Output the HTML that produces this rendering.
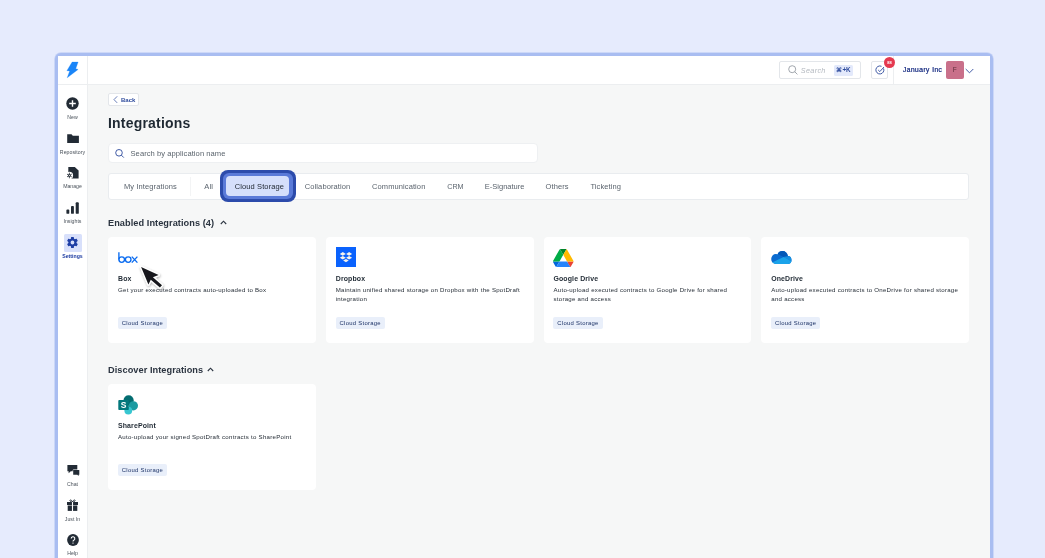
<!DOCTYPE html>
<html><head><meta charset="utf-8">
<style>
*{box-sizing:border-box;margin:0;padding:0}
html,body{will-change:transform;width:1045px;height:558px;overflow:hidden;background:#e6ebfd;font-family:"Liberation Sans",sans-serif;color:#1f2933}
.abs{position:absolute}
#frame{position:absolute;left:55px;top:53px;width:937.5px;height:520px;border:3px solid #a9bdf1;border-bottom:none;border-radius:6px 6px 0 0;background:#f6f7f7;overflow:hidden;box-shadow:0 0 0 0.8px rgba(169,189,241,0.55)}
#sidebar{position:absolute;left:58px;top:56px;width:30px;height:510px;background:#fff;border-right:1px solid #eceef0}
#header{position:absolute;left:88px;top:56px;width:902px;height:29px;background:#fff;border-bottom:1px solid #eceef0}
#logoline{position:absolute;left:58px;top:84px;width:29px;height:1px;background:#eceef0}
.lbl{position:absolute;left:58px;width:29px;text-align:center;font-size:5.2px;line-height:1;color:#4a525b;white-space:nowrap}
.card{position:absolute;background:#fff;border-radius:4px;width:207.75px;height:105.5px}
.ctitle{position:absolute;left:10px;top:39px;font-size:6.95px;letter-spacing:0.12px;line-height:1;font-weight:bold;color:#1f2933;white-space:nowrap}
.cdesc{position:absolute;left:10px;top:47.94px;font-size:6.1px;letter-spacing:0.26px;line-height:9.5px;color:#242c35;width:200px;white-space:nowrap}
.tag{position:absolute;left:9.8px;top:80.2px;height:11.6px;width:49.4px;background:#e9effa;border-radius:2px;font-size:5.9px;letter-spacing:0.28px;color:#1c3266;line-height:12.3px;text-align:center;white-space:nowrap}
.tab{position:absolute;top:183.1px;font-size:7.5px;letter-spacing:0.1px;line-height:1;color:#5a636d;white-space:nowrap}
h2{position:absolute;font-size:9.2px;letter-spacing:0.06px;line-height:1;font-weight:bold;color:#2b3440;white-space:nowrap}
</style></head><body>
<div id="frame"></div>
<div id="sidebar"></div>
<div id="header"></div>
<div id="logoline"></div>

<!-- logo -->
<svg class="abs" style="left:66px;top:61px" width="13" height="18" viewBox="0 0 13 18">
<path d="M6.1 1.1L12.1 1.1 9.75 7.7 12.1 8.4 1.2 16.8 3.7 9.9 0.9 9.7Z" fill="#1a85f8" stroke="#1a85f8" stroke-width="0.3" stroke-linejoin="round"/>
</svg>

<!-- sidebar icons -->
<svg class="abs" style="left:66px;top:97.2px" width="13" height="13" viewBox="0 0 13 13">
<circle cx="6.5" cy="6.5" r="6.2" fill="#222b35"/>
<path d="M6.5 3.2v6.6M3.2 6.5h6.6" stroke="#fff" stroke-width="1.4"/>
</svg>
<div class="lbl" style="top:115px">New</div>

<svg class="abs" style="left:66.5px;top:133.5px" width="13" height="10" viewBox="0 0 13 10">
<path d="M0.2 0.3h4.3l1.3 1.4h6.1v7.4h-11.7z" fill="#222b35"/>
</svg>
<div class="lbl" style="top:149.8px;letter-spacing:0.05px">Repository</div>

<svg class="abs" style="left:67px;top:167px" width="12" height="12" viewBox="0 0 12 12">
<path d="M1.3 0H7.8L11.6 3.5V11.6H1.3Z" fill="#222b35"/>
<circle cx="2.4" cy="8.5" r="3.7" fill="#fff"/>
<path d="M2.4 5.7V11.3M0 7.1L4.8 9.9M0 9.9L4.8 7.1" stroke="#222b35" stroke-width="0.8"/>
<circle cx="2.4" cy="8.5" r="1.3" fill="#222b35"/>
<circle cx="2.4" cy="8.5" r="0.55" fill="#fff"/>
</svg>
<div class="lbl" style="top:183.5px">Manage</div>

<svg class="abs" style="left:66px;top:201.5px" width="13" height="12" viewBox="0 0 13 12">
<rect x="0.4" y="7.5" width="2.9" height="4.3" rx="0.9" fill="#222b35"/>
<rect x="5" y="3.9" width="2.9" height="7.9" rx="0.9" fill="#222b35"/>
<rect x="9.7" y="0.3" width="3.1" height="11.5" rx="0.9" fill="#222b35"/>
</svg>
<div class="lbl" style="top:218.5px">Insights</div>

<div class="abs" style="left:63.9px;top:234px;width:18px;height:17.5px;background:#d8e0fb;border-radius:1.5px"></div>
<svg class="abs" style="left:66.15px;top:235.7px" width="13" height="13" viewBox="0 0 24 24">
<path fill="#1d3ea5" d="M19.4 13c.04-.33.06-.66.06-1s-.02-.67-.06-1l2.1-1.65a.5.5 0 0 0 .12-.64l-2-3.46a.5.5 0 0 0-.6-.22l-2.49 1a7.3 7.3 0 0 0-1.73-1L14.4 2.42A.5.5 0 0 0 13.9 2h-4a.5.5 0 0 0-.5.42L9.04 5.07c-.63.26-1.2.6-1.73 1l-2.49-1a.5.5 0 0 0-.6.22l-2 3.46a.5.5 0 0 0 .12.64L4.44 11c-.04.33-.06.66-.06 1s.02.67.06 1l-2.1 1.65a.5.5 0 0 0-.12.64l2 3.46c.12.22.38.3.6.22l2.49-1c.53.4 1.1.74 1.73 1l.38 2.65c.04.24.25.42.5.42h4c.25 0 .46-.18.5-.42l.38-2.65c.63-.26 1.2-.6 1.73-1l2.49 1c.22.08.48 0 .6-.22l2-3.46a.5.5 0 0 0-.12-.64zM11.9 15.5a3.5 3.5 0 1 1 0-7 3.5 3.5 0 0 1 0 7z"/>
</svg>
<div class="lbl" style="top:254px;color:#1b3aa0;font-weight:bold">Settings</div>

<svg class="abs" style="left:66.5px;top:465px" width="13" height="12" viewBox="0 0 13 12">
<path d="M0.4 0H10.3V6.3H3.8L1.6 8.3V6.3H0.4Z" fill="#222b35"/>
<path d="M6.2 4.9H12.3V9.8H11.6V11L10.3 9.8H6.2Z" fill="#222b35" stroke="#fff" stroke-width="0.9" paint-order="stroke"/>
</svg>
<div class="lbl" style="top:482px">Chat</div>

<svg class="abs" style="left:66.9px;top:499.4px" width="11" height="12" viewBox="0 0 11 12">
<path d="M5.5 2.8C4.6 0.8 2.6 0.3 3 1.8S5.5 2.8 5.5 2.8M5.5 2.8C6.4 0.8 8.4 0.3 8 1.8S5.5 2.8 5.5 2.8" stroke="#222b35" stroke-width="0.9" fill="none"/>
<rect x="0" y="3" width="11" height="3" fill="#222b35"/>
<rect x="0.7" y="6.5" width="9.6" height="5.4" fill="#222b35"/>
<rect x="4.95" y="3" width="1.1" height="9" fill="#fff"/>
</svg>
<div class="lbl" style="top:516.8px">Just In</div>

<svg class="abs" style="left:66.5px;top:534px" width="12" height="12" viewBox="0 0 12 12">
<circle cx="6" cy="6" r="5.9" fill="#222b35"/>
<path d="M4.2 4.6a1.8 1.8 0 1 1 2.6 1.6c-.6.3-.8.6-.8 1.3" stroke="#fff" stroke-width="1.1" fill="none"/>
<circle cx="6" cy="9.1" r="0.7" fill="#fff"/>
</svg>
<div class="lbl" style="top:550.5px">Help</div>

<!-- header right -->
<div class="abs" style="left:779px;top:61px;width:82px;height:18px;border:1px solid #e3e6ea;border-radius:2px;background:#fff"></div>
<svg class="abs" style="left:787.5px;top:65px" width="10" height="10" viewBox="0 0 10 10">
<circle cx="4.2" cy="4.2" r="3.5" stroke="#8a9199" stroke-width="0.8" fill="none"/>
<path d="M6.8 6.8l2.6 2.6" stroke="#8a9199" stroke-width="0.8"/>
</svg>
<div class="abs" style="left:800.8px;top:66.6px;font-size:7.2px;letter-spacing:0.35px;line-height:1;font-style:italic;color:#b3b8bf">Search</div>
<div class="abs" style="left:834px;top:65px;width:19px;height:10.5px;background:#e3e9fb;border-radius:1.5px;font-size:6.3px;font-weight:bold;color:#2d4a9c;text-align:center;line-height:10.5px">&#8984;+K</div>

<div class="abs" style="left:871px;top:61px;width:17px;height:18px;border:1px solid #e3e6ea;border-radius:2px;background:#fff"></div>
<svg class="abs" style="left:875px;top:65px" width="10" height="10" viewBox="0 0 10 10">
<path d="M8.6 3.5A4 4 0 1 1 6.5 1.3" stroke="#2d4a9c" stroke-width="0.9" fill="none"/>
<path d="M3.2 5l1.6 1.6 4.2-4.6" stroke="#2d4a9c" stroke-width="0.9" fill="none"/>
</svg>
<div class="abs" style="z-index:3;left:883.9px;top:57px;width:11px;height:11px;border-radius:50%;background:#e5394f;font-size:4px;color:#fff;text-align:center;line-height:11px;font-weight:bold">88</div>
<div class="abs" style="left:893px;top:56px;width:1px;height:28px;background:#eceef0"></div>
<div class="abs" style="left:902.7px;top:67px;font-size:6.9px;line-height:1;letter-spacing:0.35px;color:#2a3d8c;text-shadow:0.25px 0 0 #2a3d8c;white-space:nowrap">January Inc</div>
<div class="abs" style="left:946px;top:61px;width:17.5px;height:18px;background:#c9708a;border-radius:2px;font-size:6.5px;color:#5e2d3b;text-align:center;line-height:18px">F</div>
<svg class="abs" style="left:965px;top:67.5px" width="9" height="6" viewBox="0 0 9 6">
<path d="M0.7 1l3.8 3.8 3.8-3.8" stroke="#2d4a9c" stroke-width="0.9" fill="none"/>
</svg>

<!-- back -->
<div class="abs" style="left:107.6px;top:93px;width:31px;height:12.5px;border:1px solid #e3e6ea;border-radius:2px;background:#fff"></div>
<svg class="abs" style="left:112.5px;top:95.5px" width="5" height="7" viewBox="0 0 5 7">
<path d="M4.2 0.3L1 3.6l3.2 3.3" stroke="#2d4a9c" stroke-width="0.7" fill="none"/>
</svg>
<div id="back" class="abs" style="left:121px;top:97px;font-size:6px;line-height:1;font-weight:bold;color:#2d4a9c">Back</div>

<div id="title" class="abs" style="left:108px;top:115.85px;font-size:14px;letter-spacing:0.2px;line-height:1;font-weight:bold;color:#1f2933;white-space:nowrap">Integrations</div>

<!-- search -->
<div class="abs" style="left:108px;top:143px;width:430px;height:19.5px;background:#fff;border-radius:4px;border:1px solid #eef0f2"></div>
<svg class="abs" style="left:115px;top:149px" width="10" height="9" viewBox="0 0 10 9">
<circle cx="4" cy="3.8" r="3.3" stroke="#2d4a9c" stroke-width="0.9" fill="none"/>
<path d="M6.4 6.2l2.4 2.4" stroke="#2d4a9c" stroke-width="0.9"/>
</svg>
<div id="searchtxt" class="abs" style="left:130.5px;top:149.6px;font-size:7.6px;letter-spacing:0.05px;line-height:1;color:#5b646d;white-space:nowrap">Search by application name</div>

<!-- tabs -->
<div class="abs" style="left:108px;top:173px;width:861px;height:26.5px;background:#fff;border-radius:3px;border:1px solid #e9ecef"></div>
<div class="abs" style="left:190px;top:177px;width:1px;height:19px;background:#f3f4f5"></div>
<div id="t1" class="tab" style="left:124px">My Integrations</div>
<div id="t2" class="tab" style="left:204.3px">All</div>
<div class="abs" style="left:220px;top:170px;width:75.5px;height:32px;border-radius:8px;background:#2c4bab"></div>
<div class="abs" style="left:223px;top:173px;width:69.5px;height:26px;border-radius:6px;background:#5a7ad8"></div>
<div class="abs" style="left:226px;top:176px;width:63px;height:20px;border-radius:4px;background:#d5dffb"></div>
<div id="t3" class="tab" style="left:234.8px;color:#222a35">Cloud Storage</div>
<div id="t4" class="tab" style="left:304.8px">Collaboration</div>
<div id="t5" class="tab" style="left:372px">Communication</div>
<div id="t6" class="tab" style="left:447.2px;letter-spacing:0;font-size:7.2px;top:183.4px">CRM</div>
<div id="t7" class="tab" style="left:484.8px;letter-spacing:0">E-Signature</div>
<div id="t8" class="tab" style="left:545.6px">Others</div>
<div id="t9" class="tab" style="left:590.4px">Ticketing</div>

<h2 id="h2a" style="left:108px;top:218.5px">Enabled Integrations (4)</h2>
<svg class="abs" style="left:220px;top:220px" width="7" height="5" viewBox="0 0 7 5">
<path d="M0.8 4L3.5 1.2 6.2 4" stroke="#2b3440" stroke-width="1.1" fill="none"/>
</svg>

<!-- cards -->
<div class="card" style="left:108px;top:237px">
<svg class="abs" style="left:9.5px;top:14.5px" width="21" height="12" viewBox="0 0 21 12">
<g fill="none" stroke="#0b6cf0" stroke-width="1.35">
<path d="M0.9 0.3v7.3"/>
<circle cx="3.7" cy="7.6" r="2.8"/>
<circle cx="10.2" cy="7.6" r="2.8"/>
<path d="M13.8 4.6l5.6 6M19.4 4.6l-5.6 6"/>
</g></svg>
<div id="c1t" class="ctitle">Box</div>
<div id="c1d" class="cdesc">Get your executed contracts auto-uploaded to Box</div>
<div class="tag">Cloud Storage</div>
</div>
<div class="card" style="left:325.75px;top:237px">
<svg class="abs" style="left:9.8px;top:10.3px" width="20" height="20" viewBox="0 0 20 20">
<rect width="20" height="20" fill="#0a62fd"/>
<g fill="#f7f4ea">
<path d="M6.8 5.1l3 1.8-3 1.8-3-1.8z"/>
<path d="M13.1 5.1l3 1.8-3 1.8-3-1.8z"/>
<path d="M6.8 9l3 1.8-3 1.8-3-1.8z"/>
<path d="M13.1 9l3 1.8-3 1.8-3-1.8z"/>
<path d="M9.95 11.9l2.8 1.7-2.8 1.7-2.8-1.7z"/>
</g></svg>
<div id="c2t" class="ctitle">Dropbox</div>
<div id="c2d" class="cdesc">Maintain unified shared storage on Dropbox with the SpotDraft<br>integration</div>
<div class="tag">Cloud Storage</div>
</div>
<div class="card" style="left:543.5px;top:237px">
<svg class="abs" style="left:9.5px;top:11.8px" width="20.5" height="18.3" viewBox="0 0 87.3 78">
<path d="m6.6 66.85 3.85 6.65c.8 1.4 1.950 2.5 3.3 3.3l13.75-23.8h-27.5c0 1.55.4 3.1 1.2 4.5z" fill="#0066da"/>
<path d="m43.65 25-13.75-23.8c-1.35.8-2.5 1.9-3.3 3.3l-25.4 44a9.06 9.06 0 0 0 -1.2 4.5h27.5z" fill="#00ac47"/>
<path d="m73.55 76.8c1.35-.8 2.5-1.9 3.3-3.3l1.6-2.75 7.65-13.25c.8-1.4 1.2-2.95 1.2-4.5h-27.502l5.852 11.5z" fill="#ea4335"/>
<path d="m43.65 25 13.75-23.8c-1.35-.8-2.9-1.2-4.5-1.2h-18.5c-1.6 0-3.15.45-4.5 1.2z" fill="#00832d"/>
<path d="m59.8 53h-32.3l-13.75 23.8c1.35.8 2.9 1.2 4.5 1.2h50.8c1.600 0 3.15-.45 4.5-1.2z" fill="#2684fc"/>
<path d="m73.4 26.5-12.7-22c-.8-1.4-1.95-2.5-3.3-3.3l-13.75 23.8 16.15 28h27.45c0-1.55-.4-3.1-1.2-4.5z" fill="#ffba00"/>
</svg>
<div id="c3t" class="ctitle">Google Drive</div>
<div id="c3d" class="cdesc">Auto-upload executed contracts to Google Drive for shared<br>storage and access</div>
<div class="tag">Cloud Storage</div>
</div>
<div class="card" style="left:761.25px;top:237px">
<svg class="abs" style="left:10px;top:13px" width="21" height="15" viewBox="0 0 21 15">
<defs><clipPath id="odc"><circle cx="11.5" cy="6.3" r="5.3"/><ellipse cx="4.8" cy="9" rx="4.6" ry="5.1"/><ellipse cx="16.6" cy="10" rx="3.9" ry="4.1"/><rect x="4.8" y="8.6" width="11.8" height="5.5"/></clipPath></defs>
<g clip-path="url(#odc)">
<rect width="21" height="15" fill="#0a6bd0"/>
<path d="M5 0H21V5.8L16.5 6.6 12.5 7.1 6 3.6z" fill="#0358b8"/>
<path d="M12.5 7.1L21 5.5V15H20.3V11.2z" fill="#148fe0"/>
<path d="M0 15V13L2.7 11.8 12.6 7.1 20.4 11.2 21 11.5V15z" fill="#1ba3ea"/>
</g></svg>
<div id="c4t" class="ctitle">OneDrive</div>
<div id="c4d" class="cdesc">Auto-upload executed contracts to OneDrive for shared storage<br>and access</div>
<div class="tag">Cloud Storage</div>
</div>

<h2 id="h2b" style="left:108px;top:366.4px">Discover Integrations</h2>
<svg class="abs" style="left:207px;top:366.5px" width="7" height="5" viewBox="0 0 7 5">
<path d="M0.8 4L3.5 1.2 6.2 4" stroke="#2b3440" stroke-width="1.1" fill="none"/>
</svg>
<div class="card" style="left:108px;top:384.2px">
<svg class="abs" style="left:9.5px;top:10.5px" width="22" height="21" viewBox="0 0 22 21">
<circle cx="10.6" cy="5.3" r="5.1" fill="#036c70"/>
<circle cx="15.4" cy="10.8" r="4.6" fill="#1a9ba1"/>
<circle cx="10.3" cy="15.6" r="3.9" fill="#37c6d0"/>
<rect x="0.3" y="5.1" width="10.5" height="10" rx="0.8" fill="#03787c"/>
<text x="5.5" y="13" font-family="Liberation Sans" font-weight="bold" font-size="8.5" fill="#fff" text-anchor="middle">S</text>
</svg>
<div id="c5t" class="ctitle">SharePoint</div>
<div id="c5d" class="cdesc">Auto-upload your signed SpotDraft contracts to SharePoint</div>
<div class="tag">Cloud Storage</div>
</div>

<!-- cursor -->
<svg class="abs" style="left:135px;top:260px;overflow:visible" width="35" height="32" viewBox="0 0 35 32">
<defs><filter id="sh" x="-50%" y="-50%" width="200%" height="200%"><feDropShadow dx="0.5" dy="1" stdDeviation="1.2" flood-color="#000" flood-opacity="0.35"/></filter></defs>
<path d="M6.1 7L23.6 15 17.9 17.3 27 25.2 24.9 27.6 15.8 19.7 13.4 24.4z" fill="#17191c" stroke="#fff" stroke-width="2.6" stroke-linejoin="round" paint-order="stroke" filter="url(#sh)"/>
</svg>
</body></html>
